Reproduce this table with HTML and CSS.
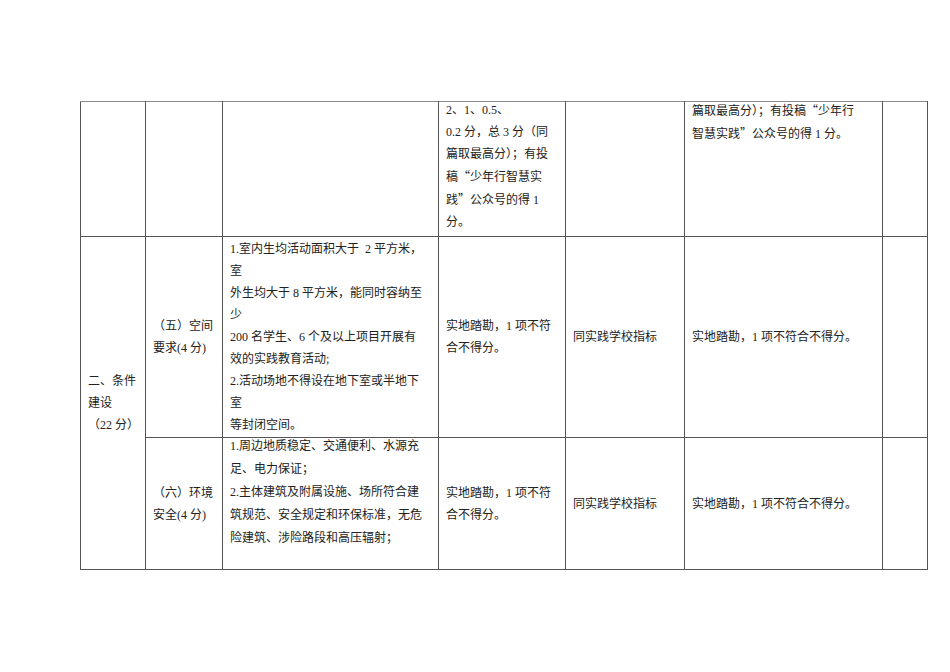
FILE: index.html
```html
<!DOCTYPE html>
<html lang="zh">
<head>
<meta charset="utf-8">
<title>条件建设</title>
<link rel="stylesheet" href="styles.css">
</head>
<body>
<div class="page">
<table class="sheet">
  <colgroup>
    <col class="c1"><col class="c2"><col class="c3"><col class="c4"><col class="c5"><col class="c6"><col class="c7">
  </colgroup>
  <tr class="r1">
    <td></td>
    <td></td>
    <td></td>
    <td class="top"><div class="lift">2、1、0.5、<br>0.2 分，总 3 分（同<br>篇取最高分）；有投<br>稿<span class="q">“</span>少年行智慧实<br>践<span class="q">”</span>公众号的得 1<br>分。</div></td>
    <td></td>
    <td class="top"><div class="lift">篇取最高分）；有投稿<span class="q">“</span>少年行<br>智慧实践<span class="q">”</span>公众号的得 1 分。</div></td>
    <td></td>
  </tr>
  <tr class="r2">
    <td rowspan="2" class="mid tight">二、条件<br>建设<br>（22 分）</td>
    <td class="mid tight">（五）空间<br>要求(4 分)</td>
    <td class="mid dense">1.室内生均活动面积大于&nbsp; 2 平方米，<br>室<br>外生均大于 8 平方米，能同时容纳至<br>少<br>200 名学生、6 个及以上项目开展有<br>效的实践教育活动;<br>2.活动场地不得设在地下室或半地下<br>室<br>等封闭空间。</td>
    <td class="mid tight">实地踏勘，1 项不符<br>合不得分。</td>
    <td class="mid">同实践学校指标</td>
    <td class="mid">实地踏勘，1 项不符合不得分。</td>
    <td></td>
  </tr>
  <tr class="r3">
    <td class="mid tight">（六）环境<br>安全(4 分)</td>
    <td class="top"><div class="lift loose">1.周边地质稳定、交通便利、水源充<br>足、电力保证；<br>2.主体建筑及附属设施、场所符合建<br>筑规范、安全规定和环保标准，无危<br>险建筑、涉险路段和高压辐射；</div></td>
    <td class="mid tight">实地踏勘，1 项不符<br>合不得分。</td>
    <td class="mid">同实践学校指标</td>
    <td class="mid">实地踏勘，1 项不符合不得分。</td>
    <td></td>
  </tr>
</table>
</div>
</body>
</html>
```

FILE: styles.css
```css
html, body {
  margin: 0;
  padding: 0;
  background: #ffffff;
}

.page {
  padding: 101px 0 0 80px;
}

.sheet {
  border-collapse: collapse;
  table-layout: fixed;
  width: 847px;
  font-family: "Liberation Serif", "Noto Sans CJK SC", serif;
  font-size: 12px;
  color: #222222;
}

.c1 { width: 65px; }
.c2 { width: 77px; }
.c3 { width: 216px; }
.c4 { width: 127px; }
.c5 { width: 119px; }
.c6 { width: 198px; }
.c7 { width: 45px; }

.sheet td {
  border: 1px solid #555555;
  padding: 0 7px;
  line-height: 22px;
  white-space: nowrap;
  overflow: hidden;
}

.sheet tr.r1 td {
  border-top-color: #8a8a8a;
}

.r1 { height: 135px; }
.r2 { height: 201px; }
.r3 { height: 132px; }

.top { vertical-align: top; }
.mid { vertical-align: middle; }

.tight { line-height: 20.5px; }
.dense { line-height: 21.5px; }

.lift { margin-top: -3px; }
.loose { line-height: 23px; }

.q {
  font-family: "Noto Sans CJK SC", sans-serif;
}
```
